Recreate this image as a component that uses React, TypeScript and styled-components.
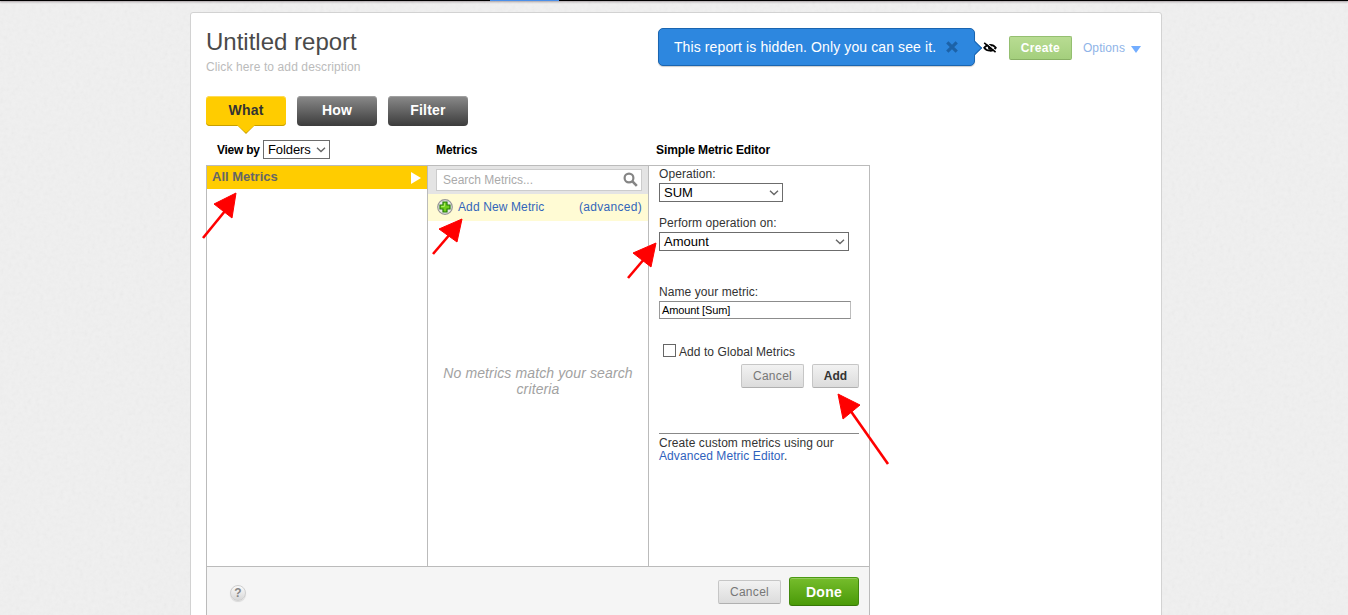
import React from "react";
import styled, { createGlobalStyle, css } from "styled-components";

const GlobalStyle = createGlobalStyle`
  * { box-sizing: border-box; }
  html, body { margin: 0; padding: 0; }
  body {
    background: #ececec;
    font-family: "Liberation Sans", Arial, sans-serif;
    font-size: 12px;
    color: #333;
    overflow: hidden;
  }
`;

const Page = styled.div`
  position: relative;
  width: 1348px;
  height: 615px;
  overflow: hidden;
  background: #f0f0f0;
`;

const PaperGrain = styled.svg`
  position: absolute;
  left: 0;
  top: 0;
  opacity: 0.07;
`;

const TopBar = styled.div`
  position: relative;
  display: flex;
  height: 1px;
  background: #000;
  box-shadow: 0 1px 2px rgba(60, 40, 50, 0.6);
`;

const ActiveMark = styled.div`
  width: 69px;
  height: 1px;
  margin-left: 490px;
  background: #4b8fe8;
`;

const Card = styled.main`
  position: relative;
  display: flex;
  flex-direction: column;
  width: 972px;
  height: 640px;
  margin: 11px 0 0 190px;
  padding: 0 15px;
  background: #fff;
  border: 1px solid #d2d2d2;
  border-radius: 3px;
`;

const Header = styled.header`
  display: flex;
  justify-content: space-between;
  height: 83px;
`;

const TitleBlock = styled.div`
  padding-top: 15px;
`;

const Title = styled.h1`
  margin: 0;
  font-size: 24px;
  line-height: 28px;
  font-weight: 400;
  color: #4a4a4a;
`;

const Description = styled.p`
  margin: 4px 0 0;
  line-height: 14px;
  letter-spacing: 0.11px;
  color: #bbb;
`;

const HeaderActions = styled.div`
  display: flex;
  align-items: center;
  height: 38px;
  margin: 15px 5px 0 0;
`;

const Notice = styled.div`
  position: relative;
  display: flex;
  align-items: center;
  width: 317px;
  height: 38px;
  padding-left: 15px;
  background: #2d87df;
  border: 1px solid #1a65b0;
  border-radius: 5px;
  box-shadow: 0 1px 1px rgba(0, 0, 0, 0.2);
  color: #fff;
  font-size: 14px;
  letter-spacing: 0.11px;
  white-space: nowrap;

  svg { margin-left: 10px; }
`;

const NoticeTip = styled.span`
  position: absolute;
  right: -6px;
  top: 14px;
  width: 10px;
  height: 10px;
  background: #2d87df;
  border: solid #1a65b0;
  border-width: 1px 1px 0 0;
  transform: rotate(45deg);
`;

const HiddenIcon = styled.svg`
  margin: 1px 12px 0 8px;
`;

const Options = styled.a`
  display: flex;
  align-items: center;
  margin-left: 11px;
  padding-top: 2px;
  letter-spacing: 0.1px;
  color: #8fb4e8;

  svg { margin: 3px 0 0 6px; }
`;

type Kind = "plain" | "strong" | "create" | "done";

const Button = styled.button<{ $kind?: Kind; $width: number }>`
  display: flex;
  align-items: center;
  justify-content: center;
  width: ${(p) => p.$width}px;
  height: 24px;
  padding: 0;
  border: 1px solid #c6c6c6;
  border-bottom-color: #b0b0b0;
  border-radius: 2px;
  background: linear-gradient(#f2f2f2, #dcdcdc);
  font: 12px "Liberation Sans", Arial, sans-serif;
  letter-spacing: 0.3px;
  color: #777;

  ${(p) => p.$kind === "strong" && css`
    font-weight: 700;
    letter-spacing: 0;
    color: #333;
  `}
  ${(p) => p.$kind === "create" && css`
    margin-top: 2px;
    border-color: #94bf70 #94bf70 #88b064;
    background: linear-gradient(#b8dc92, #a4cf7d);
    font-weight: 700;
    color: #fff;
  `}
  ${(p) => p.$kind === "done" && css`
    height: 29px;
    border-color: #4b9a12 #42880d #377707;
    border-radius: 3px;
    background: linear-gradient(#76bd2c, #4a9a08);
    box-shadow: inset 0 1px 0 #93ca5b;
    font-size: 14px;
    font-weight: 700;
    color: #fff;
  `}
`;

const Tabs = styled.nav`
  display: flex;
  gap: 11px;
  height: 44px;
`;

const Tab = styled.button<{ $active?: boolean }>`
  position: relative;
  width: 80px;
  height: 30px;
  padding: 0 0 2px;
  border: 0;
  border-radius: 4px;
  background: ${(p) => (p.$active ? "#fc0" : "linear-gradient(#8a8a8a, #3c3c3c)")};
  box-shadow: ${(p) =>
    p.$active ? "inset 0 -1px 0 #c79f00, inset 0 1px 0 #ffdb55" : "inset 0 1px 0 #a0a0a0"};
  font: 700 14px "Liberation Sans", Arial, sans-serif;
  letter-spacing: 0.2px;
  color: ${(p) => (p.$active ? "#333" : "#fff")};
`;

const TabPointer = styled.svg`
  position: absolute;
  left: 30px;
  top: 29px;
`;

const Headings = styled.div`
  display: flex;
  align-items: center;
  height: 19px;
  margin-bottom: 6px;
  font-weight: 700;
  letter-spacing: -0.1px;
  color: #000;
`;

const ViewBy = styled.label`
  display: flex;
  align-items: center;
  justify-content: space-between;
  width: 124px;
  margin-right: 106px;
  padding-left: 11px;
  letter-spacing: -0.25px;
`;

const Heading = styled.div<{ $width: number }>`
  width: ${(p) => p.$width}px;
`;

const SelectBox = styled.div<{ $width: number; $spacing?: number }>`
  display: flex;
  align-items: center;
  justify-content: space-between;
  width: ${(p) => p.$width}px;
  height: 19px;
  padding: 0 3px 0 4px;
  border: 1px solid #6c6c6c;
  background: #fff;
  font-size: 13px;
  font-weight: 400;
  letter-spacing: ${(p) => p.$spacing ?? 0}px;
  color: #000;
`;

const Builder = styled.section`
  width: 664px;
  border: 1px solid #bbb;
`;

const Columns = styled.div`
  display: grid;
  grid-template-columns: 221px 221px 220px;
  height: 400px;
`;

const Column = styled.div`
  border-right: 1px solid #bbb;

  &:last-child { border-right: 0; }
`;

const FolderRow = styled.div`
  display: flex;
  align-items: center;
  justify-content: space-between;
  height: 23px;
  padding: 0 6px 2px 5px;
  background: #fc0;
  font-size: 13px;
  font-weight: 700;
  color: #666;

  svg { margin-top: 3px; }
`;

const SearchBand = styled.div`
  height: 28px;
  padding: 3px 6px 0 8px;
  background: #e4e4e4;
`;

const SearchField = styled.div`
  display: flex;
  align-items: center;
  justify-content: space-between;
  height: 22px;
  padding: 0 3px 0 6px;
  border: 1px solid #ccc;
  background: #fff;
  color: #aaa;

  svg { margin-bottom: 1px; }
`;

const AddRow = styled.div`
  display: flex;
  align-items: center;
  height: 27px;
  padding: 0 6px 2px 9px;
  background: #fffbd4;
  letter-spacing: 0.12px;
  color: #3366bb;
`;

const AddLabel = styled.a`
  flex: 1;
  margin-left: 5px;
`;

const AdvancedLink = styled.a`
  letter-spacing: 0.3px;
`;

const Link = styled.a`
  color: #2f62bd;
`;

const Empty = styled.p`
  width: 200px;
  margin: 144px auto 0;
  font-size: 14px;
  line-height: 16px;
  font-style: italic;
  letter-spacing: 0.13px;
  text-align: center;
  color: #a2a2a2;
`;

const Editor = styled(Column)`
  padding: 1px 10px 0;
  letter-spacing: 0.07px;
`;

const FieldLabel = styled.div<{ $top: number }>`
  height: 14px;
  margin: ${(p) => p.$top}px 0 2px;
  line-height: 14px;
  white-space: nowrap;
`;

const NameField = styled.div`
  width: 192px;
  height: 18px;
  padding-left: 2px;
  border: 1px solid #bdbdbd;
  border-color: #8c8c8c #bdbdbd #8c8c8c #9a9a9a;
  font-size: 11px;
  line-height: 16px;
  letter-spacing: -0.13px;
  color: #000;
`;

const CheckRow = styled.label`
  display: flex;
  align-items: center;
  gap: 3px;
  height: 14px;
  margin: 26px 0 5px 4px;
  white-space: nowrap;
`;

const CheckBox = styled.span`
  width: 13px;
  height: 13px;
  margin-bottom: 3px;
  border: 1px solid #666;
  background: #fff;
`;

const ButtonRow = styled.div`
  display: flex;
  align-items: center;
  justify-content: flex-end;
  gap: 8px;
`;

const Hint = styled.p`
  width: 200px;
  margin: 45px 0 0;
  padding-top: 3px;
  border-top: 1px solid #888;
  line-height: 13px;
  white-space: nowrap;
`;

const Footer = styled.footer`
  display: flex;
  align-items: center;
  justify-content: space-between;
  height: 80px;
  padding: 0 10px 30px 23px;
  border-top: 1px solid #bbb;
  background: #f5f5f5;
`;

const Help = styled.span`
  display: flex;
  align-items: center;
  justify-content: center;
  width: 16px;
  height: 16px;
  margin-top: 3px;
  border: 1px solid #cfcfcf;
  border-radius: 50%;
  background: linear-gradient(#fafafa, #d8d8d8);
  box-shadow: 0 1px 1px rgba(0, 0, 0, 0.12);
  font-size: 12px;
  font-weight: 700;
  color: #858585;
`;

const Annotations = styled.svg`
  position: absolute;
  left: 0;
  top: 0;
  pointer-events: none;
`;

const Chevron = () => (
  <svg width="10" height="6" viewBox="0 0 10 6">
    <path d="M1 .8l4 3.7L9 .8" fill="none" stroke="#666" strokeWidth="1.4" />
  </svg>
);

const arrows = [
  { line: "M203 238L225 211", head: "236,193 214,204 232,218" },
  { line: "M433 254L451 233", head: "462,219 439,229 457,242" },
  { line: "M628 278L645 258", head: "656,243 633,253 651,267" },
  { line: "M888 464L850 410", head: "838,394 860,405 843,419" },
];

export default function App() {
  return (
    <>
      <GlobalStyle />
      <Page>
        <PaperGrain width="1348" height="615">
          <filter id="grain">
            <feTurbulence type="fractalNoise" baseFrequency="0.25" numOctaves="3" />
            <feColorMatrix type="saturate" values="0" />
          </filter>
          <rect width="1348" height="615" filter="url(#grain)" />
        </PaperGrain>
        <TopBar><ActiveMark /></TopBar>
        <Card>
          <Header>
            <TitleBlock>
              <Title>Untitled report</Title>
              <Description>Click here to add description</Description>
            </TitleBlock>
            <HeaderActions>
              <Notice>
                This report is hidden. Only you can see it.
                <svg width="12" height="12" viewBox="0 0 12 12">
                  <path d="M1.3 1.3l9.4 9.4M10.7 1.3l-9.4 9.4" stroke="#1c62a8" strokeWidth="3.2" />
                </svg>
                <NoticeTip />
              </Notice>
              <HiddenIcon width="14" height="12" viewBox="0 0 14 12">
                <path d="M1.2 5.8C3.8 2 10.2 1.8 12.8 5.8C10.2 9.8 3.8 9.6 1.2 5.8Z" fill="none" stroke="#000" strokeWidth="1.8" />
                <circle cx="7" cy="5.8" r="2.1" fill="#000" />
                <path d="M2.8 .4L13 9" stroke="#fff" strokeWidth="1.1" />
                <path d="M1.2 .8L12.6 10.2" stroke="#000" strokeWidth="1.6" />
              </HiddenIcon>
              <Button $kind="create" $width={63}>Create</Button>
              <Options>
                Options
                <svg width="10" height="7" viewBox="0 0 10 7">
                  <path d="M0 0h10L5 7z" fill="#72adff" />
                </svg>
              </Options>
            </HeaderActions>
          </Header>

          <Tabs>
            <Tab $active>
              What
              <TabPointer width="20" height="9" viewBox="0 0 20 9">
                <path d="M1 0h18L10 9z" fill="#c79f00" />
                <path d="M1 0h18L10 7.8z" fill="#fc0" />
              </TabPointer>
            </Tab>
            <Tab>How</Tab>
            <Tab>Filter</Tab>
          </Tabs>

          <Headings>
            <ViewBy>
              View by
              <SelectBox $width={67} $spacing={-0.1}>Folders<Chevron /></SelectBox>
            </ViewBy>
            <Heading $width={220}>Metrics</Heading>
            <Heading $width={200}>Simple Metric Editor</Heading>
          </Headings>

          <Builder>
            <Columns>
              <Column>
                <FolderRow>
                  All Metrics
                  <svg width="10" height="12" viewBox="0 0 10 12">
                    <path d="M0 0l10 6L0 12z" fill="#fff" />
                  </svg>
                </FolderRow>
              </Column>
              <Column>
                <SearchBand>
                  <SearchField>
                    Search Metrics...
                    <svg width="15" height="15" viewBox="0 0 15 15">
                      <circle cx="6" cy="6" r="4.4" fill="none" stroke="#858585" strokeWidth="2.2" />
                      <path d="M9.2 9.2l4.6 4.6" stroke="#858585" strokeWidth="2.6" />
                    </svg>
                  </SearchField>
                </SearchBand>
                <AddRow>
                  <svg width="16" height="16" viewBox="0 0 16 16">
                    <circle cx="8" cy="8" r="7.3" fill="#e9e9e9" stroke="#979797" strokeWidth="1.2" />
                    <path d="M6 3h4v3h3v4h-3v3H6v-3H3V6h3z" fill="#71cf1c" stroke="#267a0b" strokeWidth="1.2" />
                    <path d="M7.4 4.2v3.2H4.2" fill="none" stroke="#b4f06c" />
                  </svg>
                  <AddLabel>Add New Metric</AddLabel>
                  <AdvancedLink>(advanced)</AdvancedLink>
                </AddRow>
                <Empty>No metrics match your search criteria</Empty>
              </Column>
              <Editor>
                <FieldLabel $top={0}>Operation:</FieldLabel>
                <SelectBox $width={124}>SUM<Chevron /></SelectBox>
                <FieldLabel $top={14}>Perform operation on:</FieldLabel>
                <SelectBox $width={190}>Amount<Chevron /></SelectBox>
                <FieldLabel $top={34}>Name your metric:</FieldLabel>
                <NameField>Amount [Sum]</NameField>
                <CheckRow><CheckBox />Add to Global Metrics</CheckRow>
                <ButtonRow>
                  <Button $width={63}>Cancel</Button>
                  <Button $kind="strong" $width={47}>Add</Button>
                </ButtonRow>
                <Hint>
                  Create custom metrics using our
                  <br />
                  <Link>Advanced Metric Editor</Link>.
                </Hint>
              </Editor>
            </Columns>
            <Footer>
              <Help>?</Help>
              <ButtonRow>
                <Button $width={63}>Cancel</Button>
                <Button $kind="done" $width={70}>Done</Button>
              </ButtonRow>
            </Footer>
          </Builder>
        </Card>

        <Annotations width="1348" height="615" viewBox="0 0 1348 615">
          {arrows.map((arrow) => (
            <g key={arrow.line}>
              <path d={arrow.line} stroke="#f00" strokeWidth="2.6" />
              <polygon points={arrow.head} fill="#f00" stroke="#f00" strokeLinejoin="round" />
            </g>
          ))}
        </Annotations>
      </Page>
    </>
  );
}
